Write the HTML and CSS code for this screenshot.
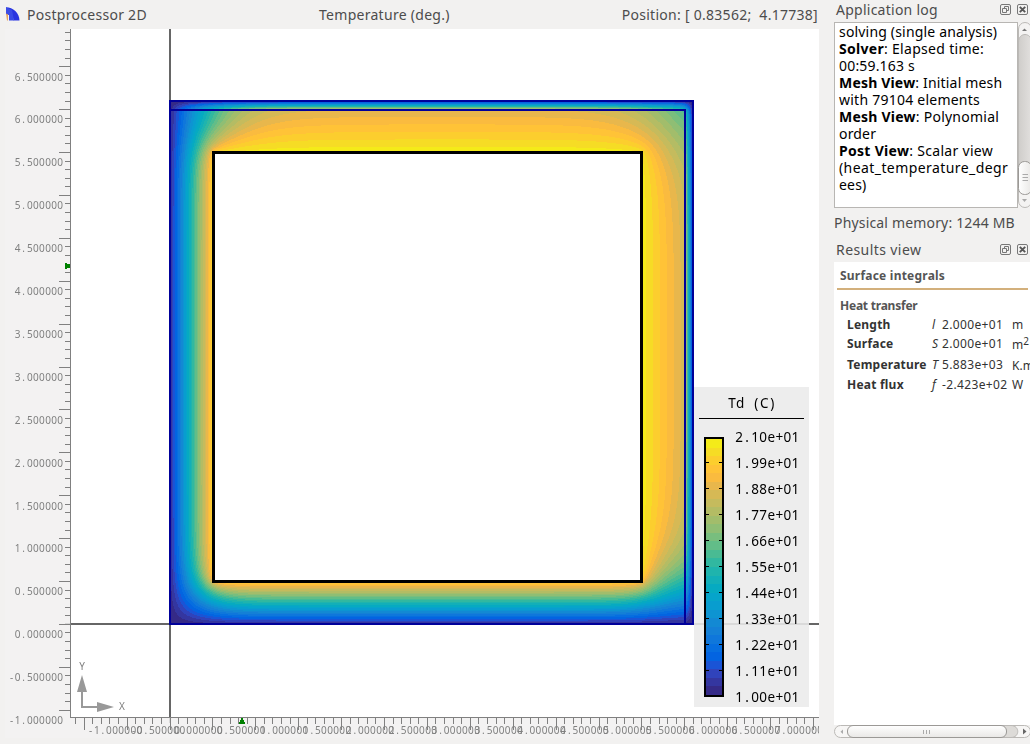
FILE: index.html
```html
<!DOCTYPE html>
<html lang="en">
<head>
<meta charset="utf-8">
<title>Postprocessor 2D</title>
<link rel="stylesheet" href="styles.css">
</head>
<body>
<div class="app">
  <main class="post">
    <header class="post-head">
      <svg class="logo" width="16" height="16" viewBox="0 0 16 16"><path d="M1 2.2C8 2.2 14.500 8 14.500 15.500H8.500C8.500 12 6 9.200 1 9Z" fill="#2a35e0"/><path d="M1 2.200V9.500L4 10V15.500H9L7 5Z" fill="#3a4be6"/><path d="M1 8.500L3 9.500V15.500H2Z" fill="#e9a45c"/></svg>
      <span class="title">Postprocessor 2D</span>
      <span class="field">Temperature (deg.)</span>
      <span class="pos">Position: [ 0.83562;&nbsp; 4.17738]</span>
    </header>
    <div class="scene">
      <svg class="layer" id="axes" width="819" height="715" viewBox="0 29 819 715"></svg>
      <canvas class="heat" id="heat" width="523" height="523"></canvas>
      <svg class="layer" id="overlay" width="819" height="715" viewBox="0 29 819 715"></svg>
    </div>
  </main>
  <aside class="side">
    <div class="dock-head"><span class="log-title">Application log</span>
      <svg class="btns" width="28" height="12" viewBox="0 0 28 12"><g fill="none" stroke="#777"><rect x=".5" y=".5" width="10" height="10" rx="1.500"/><path d="M4.500 4.500V2.500H8.500V6.500H6.500M2.500 4.500H6.500V8.500H2.500Z"/><rect x="17.500" y=".5" width="10" height="10" rx="1.500"/></g><path d="M19.800 2.800L25.200 8.200M25.200 2.800L19.800 8.200" stroke="#555" stroke-width="1.900"/></svg>
    </div>
    <div class="log-row">
      <div class="log">
        <p class="l1">solving (single analysis)</p>
        <p class="l2"><b>Solver</b>: Elapsed time:</p>
        <p class="l3">00:59.163 s</p>
        <p class="l4"><b>Mesh View</b>: Initial mesh</p>
        <p class="l5">with 79104 elements</p>
        <p class="l6"><b>Mesh View</b>: Polynomial</p>
        <p class="l7">order</p>
        <p class="l8"><b>Post View</b>: Scalar view</p>
        <p class="l9">(heat_temperature_degr</p>
        <p class="l10">ees)</p>
      </div>
      <svg class="vbar" width="12" height="186" viewBox="0 0 12 186"><defs><linearGradient id="v"><stop offset="0" stop-color="#fff"/><stop offset="1" stop-color="#e9e8e6"/></linearGradient><linearGradient id="t"><stop offset="0" stop-color="#cfcdca"/><stop offset="1" stop-color="#e2e0de"/></linearGradient></defs>
        <rect x=".5" y=".5" width="13" height="185" rx="6.500" fill="#f4f3f2" stroke="#bbb9b6"/><path d="M.5 20C.5 10 13.500 10 13.500 20V166H.5Z" fill="url(#t)" stroke="#bbb9b6"/><rect x=".5" y="139.500" width="13" height="33" rx="6" fill="url(#v)" stroke="#9b9996"/><path d="M4.500 152.500H10M4.500 155.500H10M4.500 158.500H10" stroke="#aaa"/><path d="M4 9L6.500 6.500L9 9Z" fill="#777"/><path d="M4 177L6.500 180L9 177Z" fill="#aaa"/></svg>
    </div>
    <div class="memory"><span>Physical memory: 1244 MB</span></div>
    <div class="dock-head results-head"><span class="res-title">Results view</span>
      <svg class="btns" width="28" height="12" viewBox="0 0 28 12"><g fill="none" stroke="#777"><rect x=".5" y=".5" width="10" height="10" rx="1.500"/><path d="M4.500 4.500V2.500H8.500V6.500H6.500M2.500 4.500H6.500V8.500H2.500Z"/><rect x="17.500" y=".5" width="10" height="10" rx="1.500"/></g><path d="M19.800 2.800L25.200 8.200M25.200 2.800L19.800 8.200" stroke="#555" stroke-width="1.900"/></svg>
    </div>
    <section class="results">
      <h1>Surface integrals</h1>
      <h2>Heat transfer</h2>
      <div class="row"><b>Length</b><i>l</i><span class="val">2.000e+01</span><span class="unit">m</span></div>
      <div class="row"><b>Surface</b><i>S</i><span class="val">2.000e+01</span><span class="unit low">m<sup>2</sup></span></div>
      <div class="row third"><b>Temperature</b><i>T</i><span class="val">5.883e+03</span><span class="unit low">K.m</span></div>
      <div class="row"><b>Heat flux</b><i>f</i><span class="val">-2.423e+02</span><span class="unit">W</span></div>
    </section>
    <svg class="hbar" width="196" height="13" viewBox="0 0 196 13"><defs><linearGradient id="h" x2="0" y2="1"><stop offset="0" stop-color="#fff"/><stop offset="1" stop-color="#e9e8e6"/></linearGradient></defs><rect x=".5" y=".5" width="196" height="12" rx="6" fill="#f7f6f5" stroke="#bbb9b6"/><path d="M170 .5H177C186 .5 186 12.500 177 12.500H170Z" fill="#dddbd8" stroke="#bbb9b6"/><rect x="13.500" y=".5" width="159" height="12" rx="5.500" fill="url(#h)" stroke="#9b9996"/><path d="M89.500 5V9M92.500 5V9M95.500 5V9" stroke="#aaa"/><path d="M9 4.500V9L6.500 6.700Z" fill="#aaa"/><path d="M189 3.500V9.500L192.500 6.500Z" fill="#666"/></svg>
  </aside>
</div>
<script src="scene.js"></script>
</body>
</html>
```
FILE: styles.css
```css
* { box-sizing: border-box; }
body { margin: 0; background: #f2f1f0; color: #4c4c4c; font: 14px/17px "Noto Sans", "Open Sans", sans-serif; overflow: hidden; }
.app { display: flex; width: 1030px; height: 744px; }
.post { width: 819px; flex: none; }
.post-head { display: grid; grid-template-columns: 22px 292px 1fr auto; height: 29px; padding: 6px 1px 0 5px; white-space: pre; letter-spacing: 0.28px; }
.post-head .logo { align-self: start; margin-top: -1px; }
.post-head .pos { text-align: right; }
.scene { display: grid; }
.layer { grid-area: 1 / 1; display: block; }
.heat { grid-area: 1 / 1; margin: 72px 0 0 170px; display: block; }
.mono { font-family: "Noto Sans", sans-serif; text-anchor: middle; white-space: pre; }
.ruler-text { font-size: 10px; fill: #808080; }
.legend-text { font-size: 13.5px; fill: #000; }
.side { display: flex; flex-direction: column; flex: 1; min-width: 0; padding-left: 15px; overflow: hidden; }
.dock-head { display: flex; flex: none; justify-content: space-between; height: 22px; padding: 1px 2px 0 2px; letter-spacing: 0.25px; }
.btns { margin-top: 3px; }
.log-row { display: flex; flex: none; height: 186px; }
.log { width: 184px; flex: none; border: 1px solid #b8b6b3; background: #fff; color: #000; padding: 0 4px; white-space: nowrap; }
.log p { margin: 0; letter-spacing: 0.18px; }
.log .l2, .log .l8 { letter-spacing: 0.3px; }
.log .l5, .log .l6 { letter-spacing: 0.24px; }
.log .l9 { letter-spacing: 0.42px; }
.memory { height: 32px; padding-top: 6px; white-space: nowrap; flex: none; letter-spacing: 0.17px; }
.results-head { height: 22px; letter-spacing: 0.42px; }
.results { flex: 1; background: #fff; padding: 5px 0 0 6px; font-size: 12px; color: #333; white-space: nowrap; overflow: hidden; }
.results h1 { margin: 0 2px 0 -3px; padding-left: 3px; height: 23px; font-size: 12px; line-height: 18px; color: #555; border-bottom: 2px solid #d3b07c; letter-spacing: 0.22px; }
.results h2 { margin: 7px 0 1px; font-size: 12px; line-height: 17px; color: #555; letter-spacing: -0.22px; }
.row { display: grid; grid-template-columns: 84px 11px 70px 1fr; padding-left: 7px; height: 19px; line-height: 19px; }
.row b { letter-spacing: 0.22px; }
.row i { padding-left: 1px; }
.row .val { letter-spacing: 0.35px; }
.row.third { height: 22px; line-height: 23px; }
.low { padding-top: 1px; }
sup { font-size: 10px; line-height: 0; vertical-align: 4px; }
.hbar { flex: none; margin: 0 0 6px; }
```
FILE: scene.js
```js
const NS = 'http://www.w3.org/2000/svg';
const axes = document.getElementById('axes');
const over = document.getElementById('overlay');
const palette = ['352a87','3436a0','3043bb','1a54d6','0364e1','066ee0','0f77db','1480d6','1389d3','0d94d2','089dcf','06a4ca','06aac1','12afb8','1fb4ad','31b8a0','49bb93','62bd88','78be7e','8fbe74','a2bd6b','b4bc64','c5bb5d','d6b955','e8b74c','fabb3f','ffc337','fcce2e','f6dc25','f4eb19'];

function el(parent, name, attrs, text) {
  const e = document.createElementNS(NS, name);
  for (const k in attrs) e.setAttribute(k, attrs[k]);
  if (text !== undefined) e.textContent = text;
  parent.appendChild(e);
}
function rect(parent, x, y, w, h, fill, extra) {
  el(parent, 'rect', Object.assign({ x, y, width: w, height: h, fill }, extra));
}
// Every glyph is centred in a cell of fixed width.
function mono(x, y, s, pitch, cls) {
  const xs = [...s].map((c, i) => (x + (i + 0.5) * pitch).toFixed(2)).join(' ');
  el(over, 'text', { x: xs, y, class: 'mono ' + cls }, s);
}

// Zero axes
rect(axes, 71, 29, 748, 688, '#fff');
rect(axes, 169, 29, 2, 688, '#666');
rect(axes, 65, 623, 754, 2, '#666');
rect(axes, 169, 717, 2, 6, '#666');

// Region edges
const edge = { stroke: '#00009a', 'stroke-width': 2 };
el(over, 'path', Object.assign({ d: 'M170 101H693V624H170ZM170 110H685V624', fill: 'none' }, edge));
el(over, 'path', { d: 'M213.500 152.500H641.500V581.500H213.500Z', fill: 'none', stroke: '#000', 'stroke-width': 3 });

// Rulers
rect(over, 5, 29, 66, 709, '#f2f2f2', { opacity: 0.8 });
rect(over, 71, 717, 748, 21, '#f2f2f2', { opacity: 0.8 });
rect(over, 70, 29, 1, 689, '#808080');
rect(over, 70, 717, 749, 1, '#808080');
const step = 8.58;
for (let n = -11; n <= 75; n++) {
  const x = Math.floor(170 + n * step), major = n % 5 === 0;
  if (x > 71 && x < 819) rect(over, x, 718, 1, major ? 12 : 6, '#808080');
  if (major && n >= -10) mono((n < 0 ? 87.700 : 174 - 85.800) + (n + 10) * step, 734, (n / 10).toFixed(6), 6.08, 'ruler-text');
}
for (let n = -10; n <= 69; n++) {
  const y = Math.floor(624.400 - n * step), major = n % 5 === 0;
  rect(over, major ? 59 : 65, y, major ? 11 : 5, 1, '#808080');
  const s = (n / 10).toFixed(6);
  if (major) mono(63.200 - s.length * 6.08, Math.round(638.200 - n * step), s, 6.08, 'ruler-text');
}
el(over, 'path', { d: 'M65 263V269H67V268H70V264H67V263ZM239 724V722H240V720H241V718H243V720H244V722H245V724Z', fill: '#008000' });

// Direction arrows
el(over, 'path', { d: 'M82 707V690M81 707H99', stroke: '#999', 'stroke-width': 2, fill: 'none' });
el(over, 'path', { d: 'M82 675L87 692H77ZM114 707L97 712V702Z', fill: '#999' });
mono(79, 670, 'Y', 6.100, 'ruler-text');
mono(119, 710, 'X', 6.100, 'ruler-text');

// Legend
rect(over, 694, 387, 115, 320, '#ebebeb', { opacity: 0.88 });
mono(728, 408, 'Td (C)', 8.05, 'legend-text');
rect(over, 699, 418, 105, 1, '#000');
rect(over, 704, 437, 20, 260, '#000');
palette.forEach((c, i) => {
  const a = Math.round(695 - (i + 1) * 256 / 30), b = Math.round(695 - i * 256 / 30);
  rect(over, 706, a, 16, b - a, '#' + c);
});
for (let i = 0; i <= 10; i++) {
  mono(735, 442 + i * 26, (2.1 - i * 0.11).toFixed(2) + 'e+01', 8.05, 'legend-text');
  if (i && i < 10) { rect(over, 706, 436 + i * 26, 3, 1, '#000'); rect(over, 719, 436 + i * 26, 3, 1, '#000'); }
}

// Steady heat conduction through the wall, one cell per pixel
const N = 523, dx = 1 / 85.8, kWall = 0.35, kIns = 0.0175, hIn = 12, hOut = 25, tIn = 21, tOut = 10;
const inHole = (x, y) => x >= 43 && x < 472 && y >= 51 && y < 480;
const cond = (x, y) => (y < 9 || x >= 515) ? kIns : kWall;
const G = new Float32Array(N * N * 4), S = new Float32Array(N * N), D = new Float32Array(N * N), T = new Float32Array(N * N);
const dirs = [[-1, 0], [1, 0], [0, -1], [0, 1]];
const cells = [];
for (let y = 0; y < N; y++) for (let x = 0; x < N; x++) {
  const p = y * N + x;
  if (inHole(x, y)) continue;
  cells.push(p);
  const k = cond(x, y);
  T[p] = k === kIns ? 14 : 18;
  dirs.forEach(([a, b], d) => {
    const X = x + a, Y = y + b;
    if (X < 0 || Y < 0 || X >= N || Y >= N) {
      const g = 1 / (1 / (hOut * dx) + 0.5 / k); D[p] += g; S[p] += g * tOut;
    } else if (inHole(X, Y)) {
      const g = 1 / (1 / (hIn * dx) + 0.5 / k); D[p] += g; S[p] += g * tIn;
    } else {
      const q = cond(X, Y), g = 2 * k * q / (k + q); D[p] += g; G[p * 4 + d] = g;
    }
  });
}
const list = Int32Array.from(cells), w = 1.94;
for (let it = 0; it < 420; it++) for (let c = 0; c < list.length; c++) {
  const p = list[c], g = p * 4;
  let s = S[p];
  if (G[g]) s += G[g] * T[p - 1];
  if (G[g + 1]) s += G[g + 1] * T[p + 1];
  if (G[g + 2]) s += G[g + 2] * T[p - N];
  if (G[g + 3]) s += G[g + 3] * T[p + N];
  T[p] += w * (s / D[p] - T[p]);
}
const ctx = document.getElementById('heat').getContext('2d');
const img = ctx.createImageData(N, N);
img.data.fill(255);
for (const p of cells) {
  const c = parseInt(palette[Math.max(0, Math.min(29, Math.floor((T[p] - 10) / 11 * 30)))], 16);
  img.data[p * 4] = c >> 16; img.data[p * 4 + 1] = c >> 8 & 255; img.data[p * 4 + 2] = c & 255;
}
ctx.putImageData(img, 0, 0);
```
